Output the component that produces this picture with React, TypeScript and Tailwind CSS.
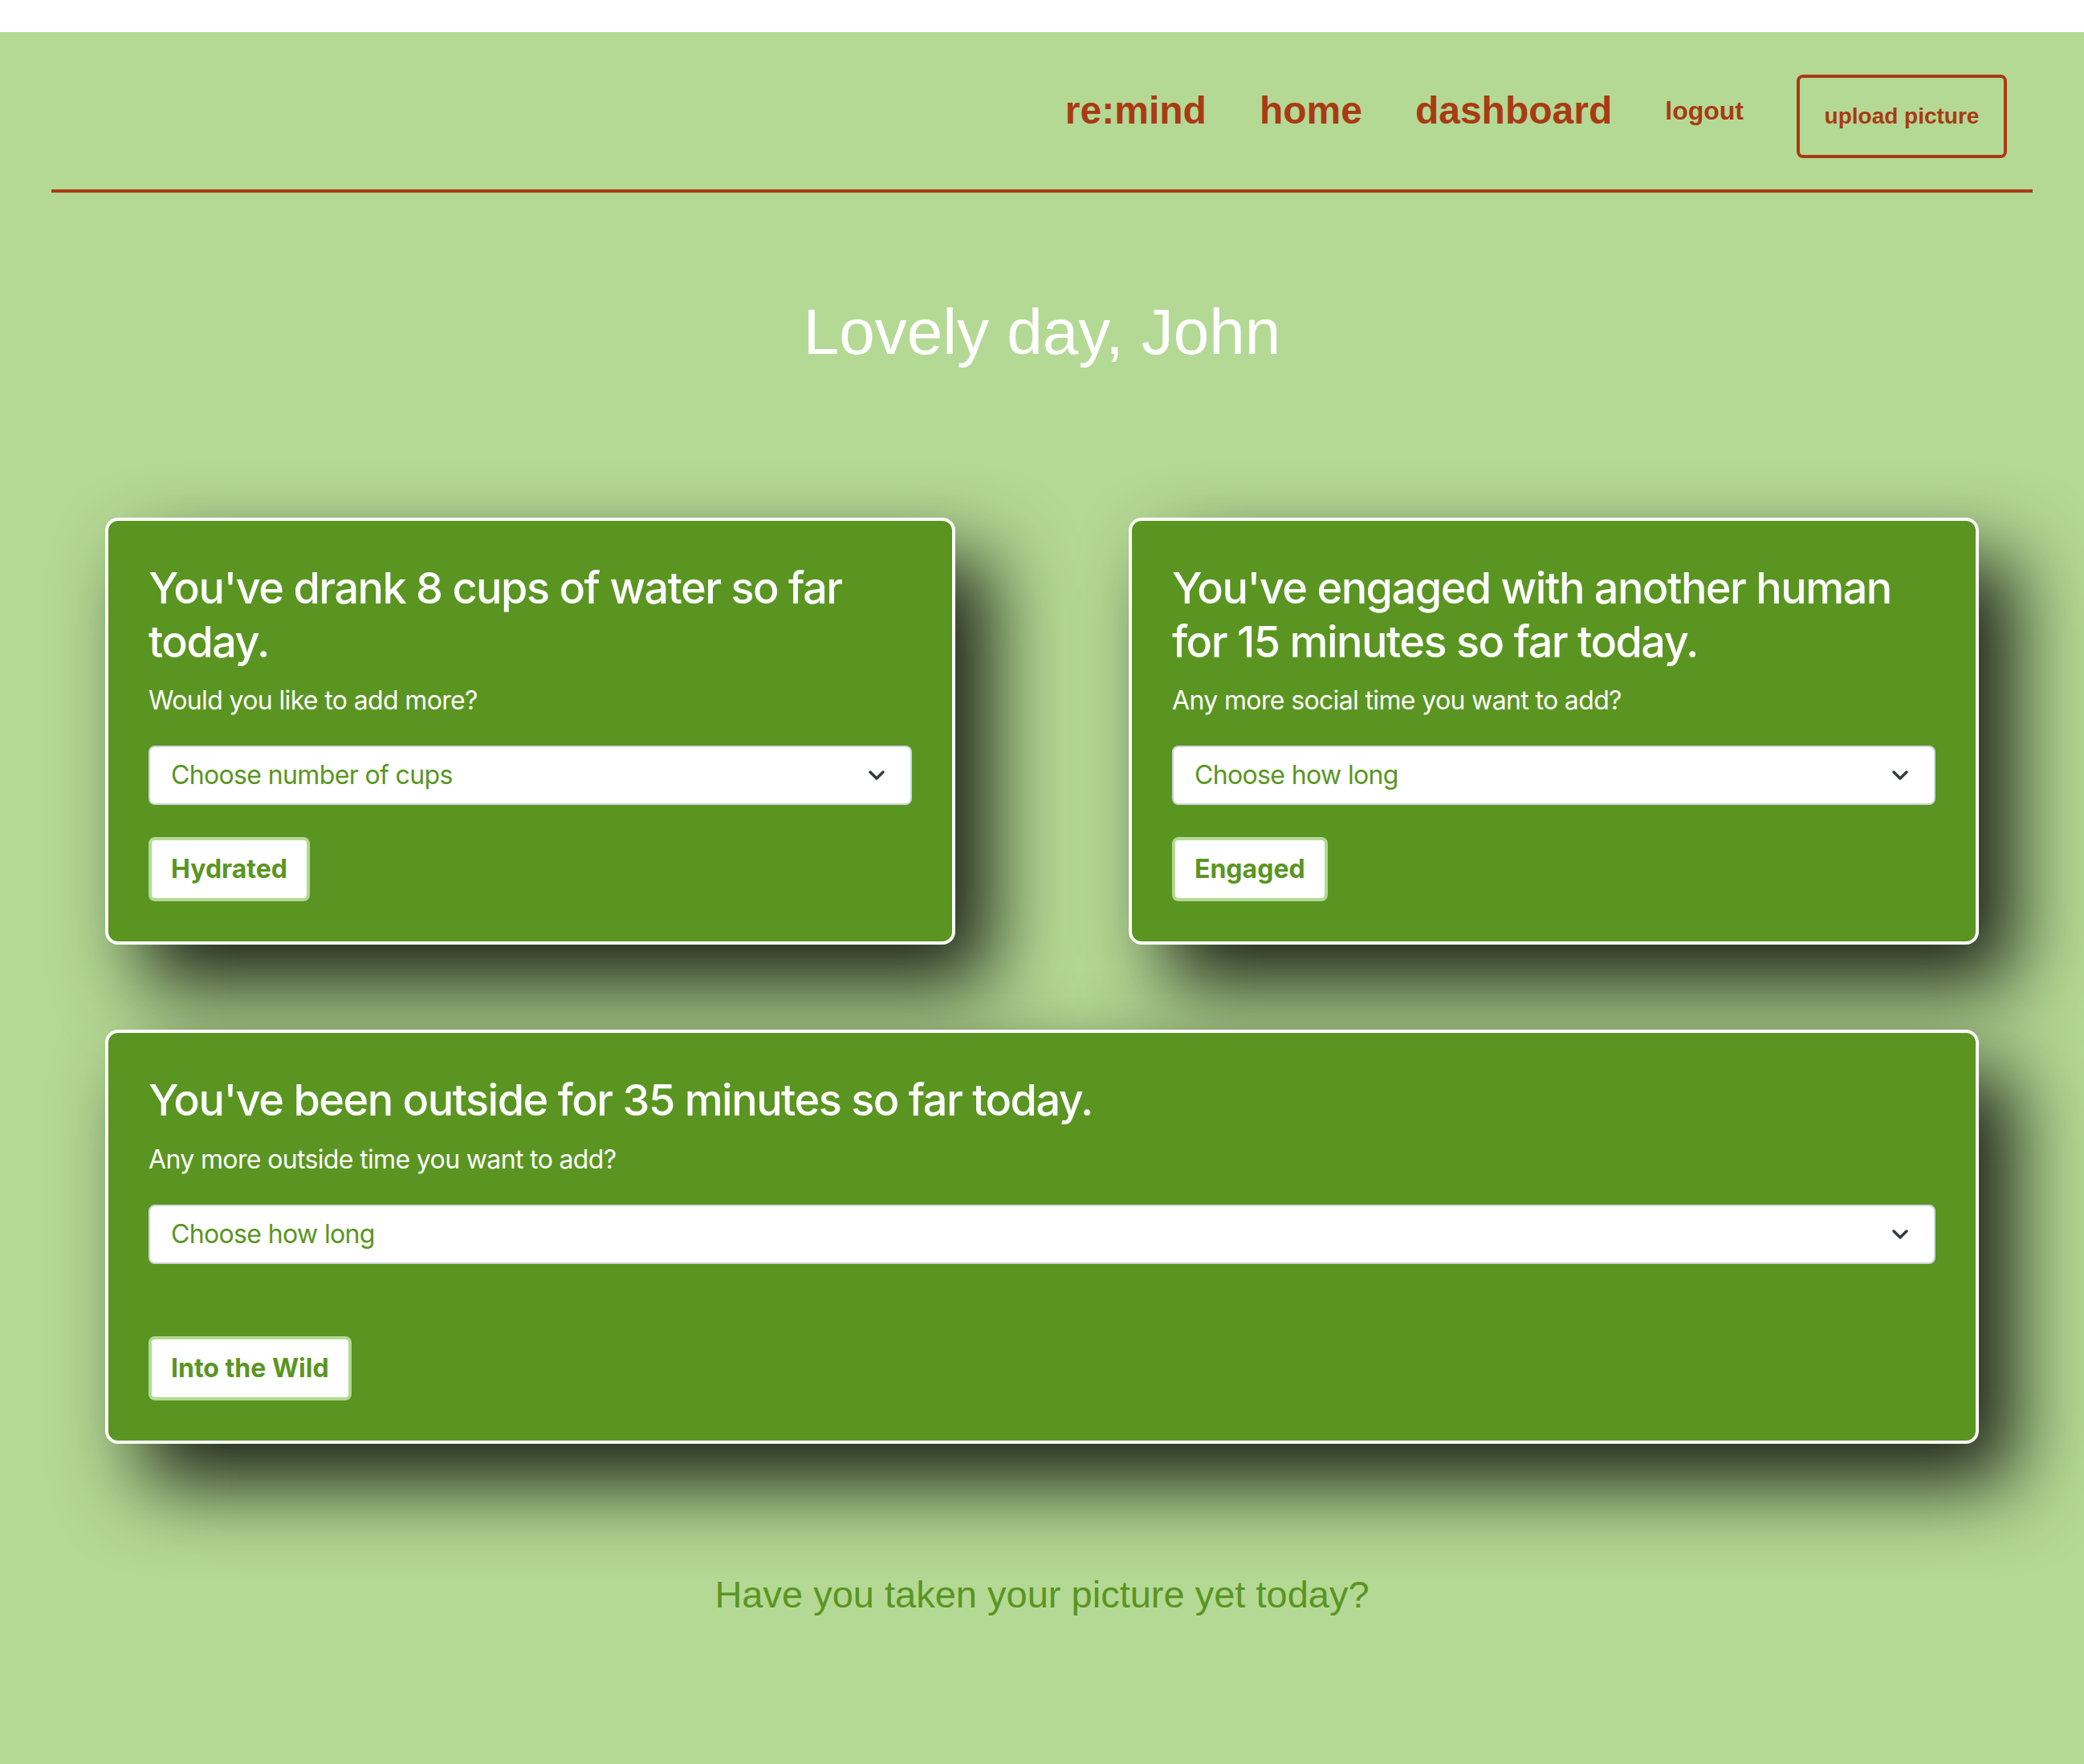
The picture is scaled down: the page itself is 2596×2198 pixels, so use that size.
import { ChevronDown } from "lucide-react";

interface TrackerCardProps {
  title: string;
  prompt: string;
  placeholder: string;
  action: string;
  wide?: boolean;
}

function TrackerCard({ title, prompt, placeholder, action, wide }: TrackerCardProps) {
  return (
    <div
      className={`rounded-[16px] border-4 border-white bg-[#5a9521] p-[50px] shadow-[45px_50px_100px_rgba(0,0,0,0.85)] ${
        wide ? "col-span-2" : ""
      }`}
    >
      <h3 className="mb-[16px] font-['Inter',sans-serif] text-[54px] font-medium leading-[1.245] tracking-[-0.028em] text-white">
        {title}
      </h3>
      <p className="mb-[32px] font-['Inter',sans-serif] text-[32px] leading-[1.5] tracking-[-0.02em] text-white">
        {prompt}
      </p>
      <div className="flex h-[74px] items-center justify-between rounded-[8px] border-2 border-[#ced4da] bg-white pl-[26px] pr-[26px]">
        <span className="font-['Inter',sans-serif] text-[32px] tracking-[-0.02em] text-[#5a9521]">{placeholder}</span>
        <ChevronDown className="h-[32px] w-[32px] text-[#343a40]" strokeWidth={2.6} />
      </div>
      <button
        className={`${
          wide ? "mt-[90px]" : "mt-[40px]"
        } flex h-[80px] items-center rounded-[8px] border-4 border-[#b4d994] bg-white px-[24px] font-['Inter',sans-serif] text-[32px] font-bold text-[#5a9521]`}
      >
        {action}
      </button>
    </div>
  );
}

export default function App() {
  return (
    <div className="flex min-h-screen flex-col font-['Liberation_Sans',Arial,sans-serif]">
      <div className="h-[40px] bg-white" />
      <main className="min-h-[2158px] flex-1 bg-[#b4d994]">
        <header className="px-[64px]">
          <nav className="flex h-[200px] items-center justify-end gap-[66px] border-b-4 border-[#a93a13] pr-[32px] text-[#a93a13]">
            <a className="text-[48px] font-bold leading-[1.2]">re:mind</a>
            <a className="text-[48px] font-bold leading-[1.2]">home</a>
            <a className="text-[48px] font-bold leading-[1.2]">dashboard</a>
            <a className="text-[32px] font-bold leading-[1.2]">logout</a>
            <button className="mt-[14px] flex h-[104px] w-[262px] items-center justify-center rounded-[8px] border-4 border-[#a93a13] text-[28px] font-bold">
              upload picture
            </button>
          </nav>
        </header>

        <h1 className="mt-[126px] text-center text-[80px] leading-[1.2] text-white">Lovely day, John</h1>

        <section className="mx-[131px] mt-[183px] grid grid-cols-2 gap-x-[216px] gap-y-[106px]">
          <TrackerCard
            title="You've drank 8 cups of water so far today."
            prompt="Would you like to add more?"
            placeholder="Choose number of cups"
            action="Hydrated"
          />
          <TrackerCard
            title="You've engaged with another human for 15 minutes so far today."
            prompt="Any more social time you want to add?"
            placeholder="Choose how long"
            action="Engaged"
          />
          <TrackerCard
            wide
            title="You've been outside for 35 minutes so far today."
            prompt="Any more outside time you want to add?"
            placeholder="Choose how long"
            action="Into the Wild"
          />
        </section>

        <h4 className="mt-[160px] text-center text-[47px] leading-[1.2] text-[#5a9521]">
          Have you taken your picture yet today?
        </h4>
      </main>
    </div>
  );
}
